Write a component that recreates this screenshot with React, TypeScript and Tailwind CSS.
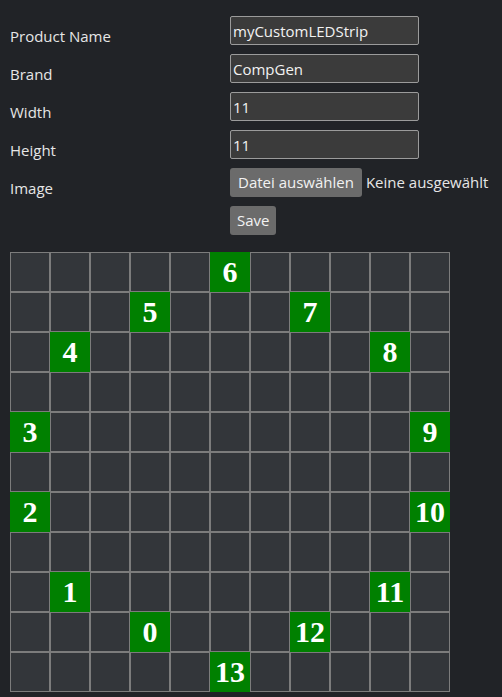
import React from "react";

const SIZE = 11;

// [row, col, label]
const leds: [number, number, number][] = [
  [9, 3, 0],
  [8, 1, 1],
  [6, 0, 2],
  [4, 0, 3],
  [2, 1, 4],
  [1, 3, 5],
  [0, 5, 6],
  [1, 7, 7],
  [2, 9, 8],
  [4, 10, 9],
  [6, 10, 10],
  [8, 9, 11],
  [9, 7, 12],
  [10, 5, 13],
];

function ledAt(row: number, col: number) {
  const hit = leds.find(([r, c]) => r === row && c === col);
  return hit ? hit[2] : null;
}

function Label({ children }: { children: React.ReactNode }) {
  return (
    <label className="h-[29px] pt-[11px] text-[15px] leading-[18px] text-[#e6e6e6]">
      {children}
    </label>
  );
}

function Field({ label, value }: { label: string; value: string }) {
  return (
    <>
      <Label>{label}</Label>
      <div className="h-[29px]">
        <input
          readOnly
          value={value}
          className="h-[29px] w-[189px] rounded-[2px] border border-[#9b9b9b] bg-[#3b3b3b] px-[2px] text-[15px] text-[#f2f2f2] outline-none"
        />
      </div>
    </>
  );
}

export default function App() {
  return (
    <div className="min-h-[697px] bg-[#212327] font-['Open_Sans',sans-serif] text-white">
      <div className="grid grid-cols-[220px_auto] gap-y-[9px] px-[10px] pt-[16px]">
        <Field label="Product Name" value="myCustomLEDStrip" />
        <Field label="Brand" value="CompGen" />
        <Field label="Width" value="11" />
        <Field label="Height" value="11" />

        <Label>Image</Label>
        <div className="flex h-[29px] items-center gap-[4px]">
          <span className="flex h-[29px] items-center rounded-[3px] bg-[#6b6b6b] px-[8px] text-[15px] text-[#f2f2f2]">
            Datei auswählen
          </span>
          <span className="text-[15px] text-[#e6e6e6]">Keine ausgewählt</span>
        </div>

        <div />
        <div className="h-[29px]">
          <button className="h-[29px] rounded-[3px] bg-[#6b6b6b] px-[7px] text-[15px] text-[#f2f2f2]">
            Save
          </button>
        </div>
      </div>

      <div className="ml-[10px] mt-[17px] inline-grid grid-cols-[repeat(11,40px)] align-top">
        {Array.from({ length: SIZE * SIZE }, (_, i) => {
          const row = Math.floor(i / SIZE);
          const col = i % SIZE;
          const n = ledAt(row, col);
          return n === null ? (
            <div key={i} className="h-[40px] w-[40px] border border-[#7c7c7c] bg-[#33363a]" />
          ) : (
            <div
              key={i}
              className="flex h-[40px] w-[40px] items-center justify-center border border-[#008000] bg-[#008000] font-['Liberation_Serif',serif] text-[30px] font-bold leading-none text-white"
            >
              {n}
            </div>
          );
        })}
      </div>
    </div>
  );
}
